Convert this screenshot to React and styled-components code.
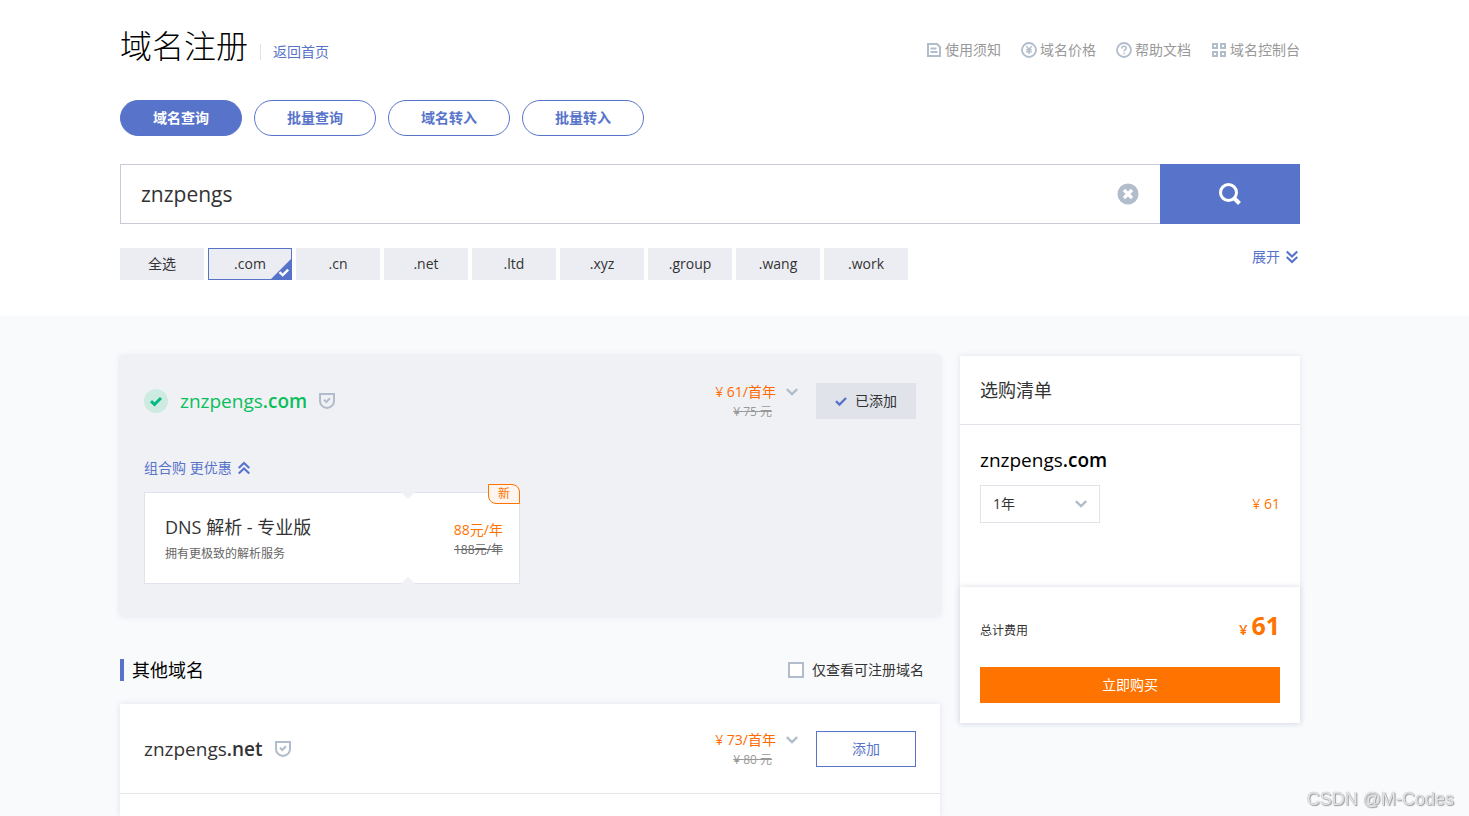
import React, { useState } from 'react';
import styled, { createGlobalStyle } from 'styled-components';

const GlobalStyle = createGlobalStyle`
* {
  box-sizing: border-box;
}
body {
  margin: 0;
  color: #333;
  background: #f9fafc;
  font: 14px/20px "Open Sans", "Noto Sans CJK SC", sans-serif;
}
button, input, select {
  font: inherit;
  color: inherit;
}
button, select {
  cursor: pointer;
}
a {
  color: inherit;
  text-decoration: none;
}
h1, h2, h3, p {
  margin: 0;
  font-weight: 400;
}
svg {
  display: block;
  flex: none;
}
`

const suffixes = ['.com', '.cn', '.net', '.ltd', '.xyz', '.group', '.wang', '.work']
const tabs = ['域名查询', '批量查询', '域名转入', '批量转入']

const DocIcon = () => (
    <svg width='16' height='16' viewBox='0 0 16 16' fill='none' stroke='#b2bdcc' strokeWidth='2'>
        <path d='M2 2h9l3 3v9H2z' />
        <path d='M4.500 6.500h6M4.500 10h7' strokeWidth='1.8' />
    </svg>
)

const YenIcon = () => (
    <svg width='16' height='16' viewBox='0 0 16 16' fill='none' stroke='#b2bdcc'>
        <circle cx='8' cy='8' r='7' strokeWidth='1.8' />
        <path d='M5.4 4.2L8 7.4l2.6-3.2M8 7.2V12M5.3 7.8h5.4M5.3 9.8h5.4' strokeWidth='1.4' />
    </svg>
)

const HelpIcon = () => (
    <svg width='16' height='16' viewBox='0 0 16 16' fill='none' stroke='#b2bdcc'>
        <circle cx='8' cy='8' r='7' strokeWidth='1.8' />
        <path d='M5.8 6.4c0-3 4.4-2.8 4.4-.2C10.200 7.600 8 7.700 8 9.500M8 10.800v1.500' strokeWidth='1.5' />
    </svg>
)

const GridIcon = () => (
    <svg width='16' height='16' viewBox='0 0 16 16' fill='none' stroke='#b2bdcc' strokeWidth='2'>
        <path d='M2 2h4v4H2zM10 2h4v4h-4zM2 10h4v4H2zM10 10h4v4h-4z' />
    </svg>
)

const ClearIcon = () => (
    <svg width='22' height='22' viewBox='0 0 22 22'>
        <circle cx='11' cy='11' r='10.500' fill='#b2bdcc' />
        <path d='M7 7l8 8M15 7l-8 8' stroke='#fff' strokeWidth='3.200' />
    </svg>
)

const SearchIcon = () => (
    <svg width='22' height='22' viewBox='0 0 22 22' fill='none' stroke='#fff'>
        <circle cx='9.500' cy='9.500' r='8' strokeWidth='3' />
        <path d='M15 15l5.500 5.500' strokeWidth='4' />
    </svg>
)

const DoubleChevron = ({ up }) => (
    <svg width='12' height='14' viewBox='0 0 12 14' fill='none' stroke='#5874ca' strokeWidth='2.200'>
        <path d={up ? 'M.7 7L6 2l5.300 5M.7 12.500L6 7.500l5.300 5' : 'M.7 1.500L6 6.500l5.300-5M.7 7L6 12l5.300-5'} />
    </svg>
)

const Chevron = () => (
    <svg width='12' height='8' viewBox='0 0 12 8' fill='none' stroke='#b2bdcc' strokeWidth='2.400'>
        <path d='M.8 1.200L6 6.200l5.200-5' />
    </svg>
)

const CheckIcon = ({ color, size = 12, weight = 2.4 }) => (
    <svg width={size} height={size} viewBox='0 0 12 12' fill='none' stroke={color} strokeWidth={weight}>
        <path d='M1 6.200l3.500 3.300L11 3' />
    </svg>
)

const ShieldIcon = () => (
    <svg width='16' height='16' viewBox='0 0 16 16' fill='none' stroke='#b2bdcc' strokeWidth='2'>
        <path d='M1 1h14v7c0 3.500-3 6.200-7 7-4-.8-7-3.500-7-7z' />
        <path d='M5 6.800l2.300 2.200L11 5.300' />
    </svg>
)

const DomainPrice = ({ price, origin }) => (
    <PriceBox>
        <PriceNow>¥ {price}/首年</PriceNow>
        <PriceOld>¥ {origin} 元</PriceOld>
    </PriceBox>
)

const App = () => {
    const [keyword, setKeyword] = useState('znzpengs')
    const [tab, setTab] = useState('域名查询')
    const [selected, setSelected] = useState(['.com'])
    const [onlyFree, setOnlyFree] = useState(false)

    const toggle = (name) => {
        setSelected(selected.includes(name) ? selected.filter((s) => s !== name) : [...selected, name])
    }

    return (
        <Page>
            <GlobalStyle />
            <Header>
                <TitleRow>
                    <Title>域名注册</Title>
                    <BackLink href='#home'>返回首页</BackLink>
                    <HelpNav>
                        <a href='#notice'><DocIcon />使用须知</a>
                        <a href='#price'><YenIcon />域名价格</a>
                        <a href='#docs'><HelpIcon />帮助文档</a>
                        <a href='#console'><GridIcon />域名控制台</a>
                    </HelpNav>
                </TitleRow>
                <Tabs>
                    {tabs.map((name) => (
                        <TabButton key={name} $active={name === tab} onClick={() => setTab(name)}>{name}</TabButton>
                    ))}
                </Tabs>
                <SearchForm onSubmit={(e) => e.preventDefault()}>
                    <SearchBox>
                        <SearchInput aria-label='域名' value={keyword} onChange={(e) => setKeyword(e.target.value)} />
                        <IconButton type='button' aria-label='清空' onClick={() => setKeyword('')}><ClearIcon /></IconButton>
                    </SearchBox>
                    <SearchButton aria-label='查询'><SearchIcon /></SearchButton>
                </SearchForm>
                <SuffixRow>
                    <Suffix onClick={() => setSelected(suffixes)}>全选</Suffix>
                    {suffixes.map((name) => (
                        <Suffix key={name} $active={selected.includes(name)} onClick={() => toggle(name)}>
                            {name}
                            {selected.includes(name) && (
                                <Corner width='20' height='20' viewBox='0 0 20 20'>
                                    <path d='M20 0v20H0z' fill='#5874ca' />
                                    <path d='M8.500 13.200l3.200 3 5.500-5.500' fill='none' stroke='#fff' strokeWidth='2.400' />
                                </Corner>
                            )}
                        </Suffix>
                    ))}
                    <Expand>展开<DoubleChevron /></Expand>
                </SuffixRow>
            </Header>
            <Content>
                <Main>
                    <ResultCard>
                        <DomainRow>
                            <Available><CheckIcon color='#00b982' weight={3} /></Available>
                            <DomainName $green>znzpengs<b>.com</b></DomainName>
                            <ShieldIcon />
                            <DomainPrice price='61' origin='75' />
                            <IconButton aria-label='价格详情'><Chevron /></IconButton>
                            <AddButton $added><CheckIcon color='#5874ca' />已添加</AddButton>
                        </DomainRow>
                        <Combo>
                            <ComboToggle>组合购 更优惠<DoubleChevron up /></ComboToggle>
                            <ComboCard>
                                <Notch width='14' height='7' viewBox='0 0 14 7'>
                                    <path d='M0 0h14L7 7z' fill='#f0f1f5' />
                                </Notch>
                                <Notch $bottom width='14' height='7' viewBox='0 0 14 7'>
                                    <path d='M0 7h14L7 0z' fill='#f0f1f5' />
                                </Notch>
                                <Badge>新</Badge>
                                <div>
                                    <h3>DNS 解析 - 专业版</h3>
                                    <p>拥有更极致的解析服务</p>
                                </div>
                                <ComboPrice>
                                    <span>88元/年</span>
                                    <del>188元/年</del>
                                </ComboPrice>
                            </ComboCard>
                        </Combo>
                    </ResultCard>
                    <SectionHead>
                        <h2>其他域名</h2>
                        <CheckLabel>
                            <input type='checkbox' checked={onlyFree} onChange={() => setOnlyFree(!onlyFree)} />
                            仅查看可注册域名
                        </CheckLabel>
                    </SectionHead>
                    <OtherList>
                        <DomainRow $line>
                            <DomainName>znzpengs<b>.net</b></DomainName>
                            <ShieldIcon />
                            <DomainPrice price='73' origin='80' />
                            <IconButton aria-label='价格详情'><Chevron /></IconButton>
                            <AddButton>添加</AddButton>
                        </DomainRow>
                    </OtherList>
                </Main>
                <Cart>
                    <CartTitle>选购清单</CartTitle>
                    <CartItem>
                        <DomainName $black>znzpengs<b>.com</b></DomainName>
                        <CartLine>
                            <SelectBox>
                                <select aria-label='年限' defaultValue='1'>
                                    <option value='1'>1年</option>
                                    <option value='2'>2年</option>
                                    <option value='3'>3年</option>
                                </select>
                                <Chevron />
                            </SelectBox>
                            <CartPrice>¥ 61</CartPrice>
                        </CartLine>
                    </CartItem>
                    <CartFoot>
                        <Total>
                            <span>总计费用</span>
                            <strong>¥ <b>61</b></strong>
                        </Total>
                        <BuyButton>立即购买</BuyButton>
                    </CartFoot>
                </Cart>
            </Content>
            <Watermark>CSDN @M-Codes</Watermark>
        </Page>
    )
}

const Page = styled.div`
min-height: 100vh;
display: flex;
flex-direction: column;
`

const Header = styled.header`
padding: 24px 169px 36px 120px;
background: #fff;
`

const TitleRow = styled.div`
display: flex;
align-items: center;
height: 44px;
`

const Title = styled.h1`
font-size: 32px;
font-weight: 300;
line-height: 44px;
color: #000;
`

const BackLink = styled.a`
margin: 12px 0 0 12px;
padding-left: 12px;
border-left: 1px solid #dfe3ec;
line-height: 16px;
color: #5874ca;
`

const HelpNav = styled.nav`
margin: 8px 0 0 auto;
display: flex;
gap: 20px;
color: #999;
a {
  display: flex;
  align-items: center;
  gap: 3px;
}
`

const Tabs = styled.div`
display: flex;
gap: 12px;
margin-top: 32px;
`

const TabButton = styled.button`
width: 122px;
height: 36px;
padding: 0;
border: 1px solid #5874ca;
border-radius: 18px;
font-weight: 700;
color: ${(p) => (p.$active ? '#fff' : '#5874ca')};
background: ${(p) => (p.$active ? '#5874ca' : '#fff')};
`

const SearchForm = styled.form`
display: flex;
height: 60px;
margin-top: 28px;
`

const SearchBox = styled.div`
flex: 1;
display: flex;
align-items: center;
padding: 0 21px 0 20px;
border: 1px solid #c8cad9;
border-right: 0;
`

const SearchInput = styled.input`
flex: 1;
min-width: 0;
padding: 0;
border: 0;
outline: 0;
font-size: 21px;
line-height: 28px;
`

const IconButton = styled.button`
padding: 0;
border: 0;
background: none;
`

const SearchButton = styled.button`
width: 140px;
display: flex;
align-items: center;
justify-content: center;
border: 0;
background: #5874ca;
`

const SuffixRow = styled.div`
display: flex;
flex-wrap: wrap;
gap: 4px;
margin-top: 24px;
`

const Suffix = styled.button`
position: relative;
width: 84px;
height: 32px;
padding: 0;
border: 1px solid ${(p) => (p.$active ? '#5874ca' : '#ecedf3')};
background: #ecedf3;
`

const Corner = styled.svg`
position: absolute;
right: 0;
bottom: 0;
`

const Expand = styled.button`
display: flex;
align-items: center;
gap: 6px;
height: 18px;
margin-left: auto;
padding: 0 2px;
border: 0;
background: none;
color: #5874ca;
`

const Content = styled.div`
flex: 1;
display: grid;
grid-template-columns: 1fr 340px;
gap: 20px;
padding: 40px 169px 0 120px;
`

const Main = styled.main`
display: flex;
flex-direction: column;
`

const ResultCard = styled.section`
padding-bottom: 32px;
background: #f0f1f5;
box-shadow: 0 0 6px #dfe3f0;
`

const DomainRow = styled.div`
display: flex;
align-items: center;
height: 90px;
padding: 0 24px;
border-bottom: ${(p) => (p.$line ? '1px solid #e3e5eb' : '0')};
${IconButton} {
  margin: 0 18px 18px 10px;
}
`

const Available = styled.span`
display: flex;
align-items: center;
justify-content: center;
width: 24px;
height: 24px;
margin-right: 12px;
border-radius: 50%;
background: #cdebe1;
`

const DomainName = styled.div`
margin-right: 12px;
font-size: 19px;
line-height: 26px;
color: ${(p) => (p.$green ? '#0abf5b' : p.$black ? '#000' : '#333')};
b {
  font-weight: 600;
}
`

const PriceBox = styled.div`
display: flex;
flex-direction: column;
margin: 2px 0 0 auto;
`

const PriceNow = styled.span`
color: #ff6a00;
`

const PriceOld = styled.del`
padding-right: 4px;
font-size: 12px;
text-align: right;
color: #999;
`

const AddButton = styled.button`
display: flex;
align-items: center;
justify-content: center;
gap: 8px;
width: 100px;
height: 36px;
padding: 0;
border: 1px solid ${(p) => (p.$added ? '#e0e3e9' : '#5874ca')};
color: ${(p) => (p.$added ? '#333' : '#5874ca')};
background: ${(p) => (p.$added ? '#e0e3e9' : '#fff')};
`

const Combo = styled.div`
padding: 12px 24px 0;
`

const ComboToggle = styled.button`
display: flex;
align-items: center;
gap: 6px;
height: 20px;
padding: 0;
border: 0;
background: none;
color: #5874ca;
`

const ComboCard = styled.div`
position: relative;
display: flex;
justify-content: space-between;
align-items: center;
width: 376px;
height: 92px;
margin-top: 14px;
padding: 4px 16px 0 20px;
border: 1px solid #e0e3ec;
background: #fff;
h3 {
  font-size: 18px;
  line-height: 28px;
}
p {
  font-size: 12px;
  line-height: 26px;
  color: #666;
}
`

const Notch = styled.svg`
position: absolute;
left: 256px;
${(p) => (p.$bottom ? 'bottom: -1px;' : 'top: -1px;')}
`

const Badge = styled.span`
position: absolute;
top: -9px;
right: -1px;
width: 32px;
height: 20px;
border: 1px solid #ff7300;
border-radius: 0 8px 0 8px;
font-size: 12px;
line-height: 18px;
text-align: center;
color: #ff7300;
background: #fff5ee;
`

const ComboPrice = styled.div`
display: flex;
flex-direction: column;
align-items: flex-end;
color: #ff7300;
del {
  font-size: 12px;
  color: #666;
}
`

const SectionHead = styled.div`
display: flex;
justify-content: space-between;
align-items: center;
height: 22px;
margin: 43px 0 23px;
padding-right: 16px;
h2 {
  padding-left: 8px;
  border-left: 4px solid #5874ca;
  font-size: 18px;
  line-height: 22px;
  color: #000;
}
`

const CheckLabel = styled.label`
display: flex;
align-items: center;
gap: 8px;
input {
  appearance: none;
  width: 16px;
  height: 16px;
  margin: 0;
  border: 2px solid #b2bdcc;
  background: #fff;
}
input:checked {
  background: #5874ca;
}
`

const OtherList = styled.section`
flex: 1;
background: #fff;
box-shadow: 0 0 6px #dfe3f0;
`

const Cart = styled.aside`
align-self: start;
background: #fff;
box-shadow: 0 0 6px #dfe3f0;
`

const CartTitle = styled.h2`
padding: 0 20px;
border-bottom: 1px solid #e0e3e9;
font-size: 18px;
line-height: 68px;
`

const CartItem = styled.div`
min-height: 162px;
padding: 22px 20px;
`

const CartLine = styled.div`
display: flex;
justify-content: space-between;
align-items: center;
margin-top: 12px;
`

const SelectBox = styled.div`
display: grid;
align-items: center;
width: 120px;
height: 38px;
select {
  grid-area: 1 / 1;
  height: 38px;
  padding: 0 12px;
  appearance: none;
  border: 1px solid #e0e3e9;
  border-radius: 0;
  background: #fff;
}
svg {
  grid-area: 1 / 1;
  justify-self: end;
  margin-right: 13px;
  pointer-events: none;
}
`

const CartPrice = styled.span`
color: #ff7300;
`

const CartFoot = styled.div`
padding: 20px;
box-shadow: 0 0 6px #d9dbe2;
`

const Total = styled.div`
display: flex;
justify-content: space-between;
align-items: baseline;
height: 40px;
margin-bottom: 20px;
font-size: 12px;
strong {
  font-size: 15px;
  font-weight: 600;
  line-height: 36px;
  color: #ff7300;
}
b {
  font-size: 25px;
  font-weight: 700;
}
`

const BuyButton = styled.button`
width: 100%;
height: 36px;
border: 0;
color: #fff;
background: #ff7300;
`

const Watermark = styled.div`
position: fixed;
right: 15px;
bottom: 6px;
font: 18px/22px "Liberation Sans", sans-serif;
color: #e4e5e8;
text-shadow: 0 0 1px #999, 1px 1px 1px #999;
`

export default App
